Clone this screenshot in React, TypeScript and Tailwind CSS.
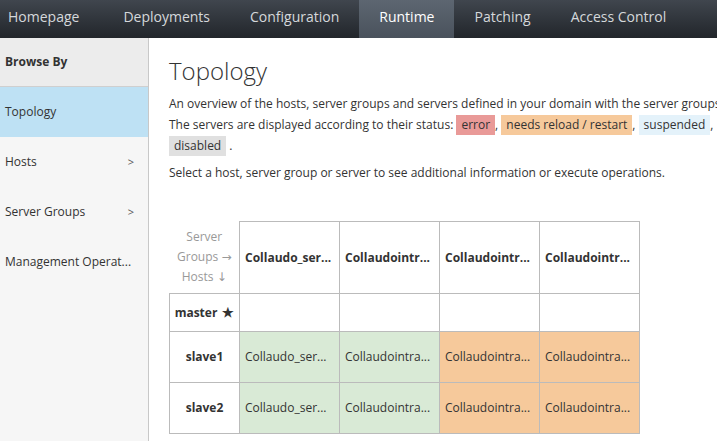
import React from 'react';

const tabs = ['Homepage', 'Deployments', 'Configuration', 'Runtime', 'Patching', 'Access Control'];

const sideItems = [
  { label: 'Topology', active: true, chevron: false },
  { label: 'Hosts', active: false, chevron: true },
  { label: 'Server Groups', active: false, chevron: true },
  { label: 'Management Operat...', active: false, chevron: false },
];

const groups = ['Collaudo_ser...', 'Collaudointr...', 'Collaudointr...', 'Collaudointr...'];

interface HostRow {
  name: string;
  star?: boolean;
  cells: { label: string; tone: string }[];
}

const hosts: HostRow[] = [
  { name: 'master', star: true, cells: [] },
  {
    name: 'slave1',
    cells: [
      { label: 'Collaudo_ser...', tone: 'bg-[#d9ead6]' },
      { label: 'Collaudointra...', tone: 'bg-[#d9ead6]' },
      { label: 'Collaudointra...', tone: 'bg-[#f6c99b]' },
      { label: 'Collaudointra...', tone: 'bg-[#f6c99b]' },
    ],
  },
  {
    name: 'slave2',
    cells: [
      { label: 'Collaudo_ser...', tone: 'bg-[#d9ead6]' },
      { label: 'Collaudointra...', tone: 'bg-[#d9ead6]' },
      { label: 'Collaudointra...', tone: 'bg-[#f6c99b]' },
      { label: 'Collaudointra...', tone: 'bg-[#f6c99b]' },
    ],
  },
];

const Label: React.FC<{ className: string; children: React.ReactNode }> = ({ className, children }) => (
  <span className={`inline-block px-[5px] leading-[20px] ${className}`}>{children}</span>
);

const App: React.FC = () => {
  return (
    <div className="w-[717px] h-[441px] overflow-hidden bg-white text-[#333] font-['Open_Sans',sans-serif]">
      <nav className="h-[38px] flex items-stretch bg-gradient-to-b from-[#40464e] to-[#22262b] text-[14px] text-[#d5d8db]">
        {tabs.map((t, i) => (
          <div
            key={t}
            className={`flex items-center pb-[5px] ${i === 0 ? 'pl-[8px] pr-[24px]' : 'px-5'} ${
              t === 'Runtime' ? 'bg-gradient-to-b from-[#5d6671] to-[#4a525c] text-white' : ''
            }`}
          >
            {t}
          </div>
        ))}
      </nav>

      <div className="flex h-[403px]">
        <aside className="w-[149px] shrink-0 bg-[#f6f6f6] border-r border-[#c8c8c8] text-[12px]">
          <div className="h-[49px] bg-[#ececec] border-b border-[#cfcfcf] flex items-center px-[5px] font-bold">
            Browse By
          </div>
          {sideItems.map((item) => (
            <div
              key={item.label}
              className={`h-[50px] flex items-center justify-between pl-[5px] pr-[14px] ${
                item.active ? 'bg-[#bee1f4]' : ''
              }`}
            >
              <span className="whitespace-nowrap">{item.label}</span>
              {item.chevron && <span className="text-[11px] text-[#555]">&gt;</span>}
            </div>
          ))}
        </aside>

        <main className="pl-[20px] pt-[16px] w-[900px] shrink-0 text-[12px]">
          <h1 className="text-[24px] font-light leading-[34px] text-[#333]">Topology</h1>
          <p className="mt-[6px] leading-[20px] whitespace-nowrap">
            An overview of the hosts, server groups and servers defined in your domain with the server groups as columns and the hosts as rows.
            <br />
            The servers are displayed according to their status: <Label className="bg-[#e99a98]">error</Label>,{' '}
            <Label className="bg-[#f6c99b]">needs reload / restart</Label>, <Label className="bg-[#e4f2fa]">suspended</Label>,{' '}
            <Label className="bg-white border border-[#d7e9c9]">started</Label>
            <br />
            <Label className="bg-[#e0e0e0]">disabled</Label> .
          </p>
          <p className="mt-[7px] leading-[20px]">
            Select a host, server group or server to see additional information or execute operations.
          </p>

          <table className="mt-[38px] border-collapse table-fixed">
            <thead>
              <tr className="h-[72px]">
                <th className="w-[70px] p-0 text-center font-normal text-[#999] leading-[20px] align-middle">
                  Server
                  <br />
                  Groups <span className="font-['DejaVu_Sans',sans-serif] text-[12px]">→</span>
                  <br />
                  Hosts <span className="font-['DejaVu_Sans',sans-serif] text-[12px]">↓</span>
                </th>
                {groups.map((g, i) => (
                  <th
                    key={i}
                    className="w-[100px] border border-[#bbb] px-[5px] text-left font-bold whitespace-nowrap overflow-hidden"
                  >
                    {g}
                  </th>
                ))}
              </tr>
            </thead>
            <tbody>
              {hosts.map((h) => (
                <tr key={h.name} className={h.star ? 'h-[38px]' : 'h-[51px]'}>
                  <td className="border border-[#bbb] text-center font-bold whitespace-nowrap">
                    {h.name}
                    {h.star && <span className="ml-[5px] text-[13px]">★</span>}
                  </td>
                  {(h.cells.length ? h.cells : groups.map(() => ({ label: '', tone: '' }))).map((c, i) => (
                    <td
                      key={i}
                      className={`border border-[#bbb] px-[5px] whitespace-nowrap overflow-hidden ${c.tone}`}
                    >
                      {c.label}
                    </td>
                  ))}
                </tr>
              ))}
            </tbody>
          </table>
        </main>
      </div>
    </div>
  );
};

export default App;
